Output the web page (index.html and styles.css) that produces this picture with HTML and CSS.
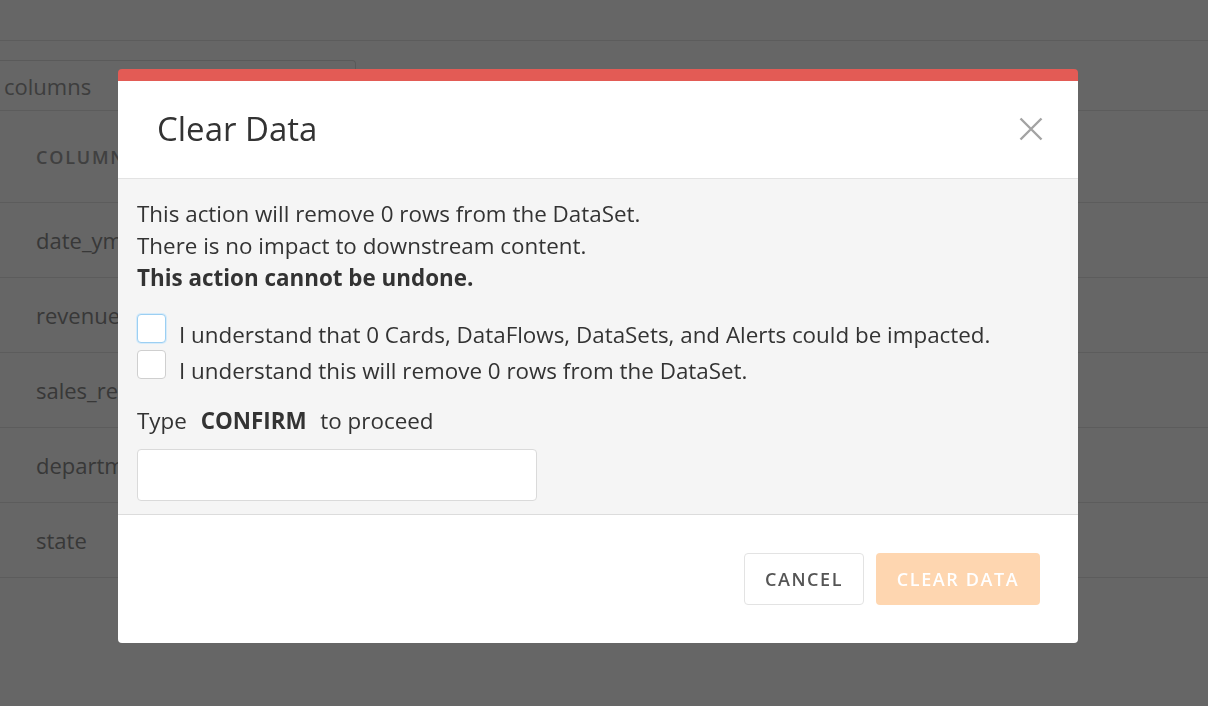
FILE: index.html
```html
<!DOCTYPE html>
<html>
<head>
<meta charset="utf-8">
<link rel="stylesheet" href="styles.css">
</head>
<body>
<div class="page">
  <div class="topbar"></div>
  <div class="searchrow">
    <div class="search">columns</div>
  </div>
  <div class="thead">COLUMNS</div>
  <div class="trow">date_ym</div>
  <div class="trow">revenue</div>
  <div class="trow">sales_rep</div>
  <div class="trow">department</div>
  <div class="trow">state</div>
</div>
<div class="overlay">
  <div class="modal">
    <div class="modal-header">
      <h2 class="title">Clear Data</h2>
      <button class="close" aria-label="Close">
        <svg width="24" height="24" viewBox="0 0 24 24"><path d="M1.5 1.5 L22.5 22.5 M22.5 1.5 L1.5 22.5" stroke="#a3a3a3" stroke-width="2.4" fill="none"/></svg>
      </button>
    </div>
    <div class="modal-body">
      <p class="line">This action will remove 0 rows from the DataSet.</p>
      <p class="line">There is no impact to downstream content.</p>
      <p class="line strong">This action cannot be undone.</p>
      <div class="checks">
        <label class="check"><span class="box focus"></span><span class="ctext">I understand that 0 Cards, DataFlows, DataSets, and Alerts could be impacted.</span></label>
        <label class="check"><span class="box"></span><span class="ctext">I understand this will remove 0 rows from the DataSet.</span></label>
      </div>
      <p class="confirm">Type <b>CONFIRM</b> to proceed</p>
      <div class="input"></div>
    </div>
    <div class="modal-footer">
      <button class="btn cancel">CANCEL</button>
      <button class="btn clear">CLEAR DATA</button>
    </div>
  </div>
</div>
</body>
</html>
```

FILE: styles.css
```css
* { box-sizing: border-box; }
html, body { margin: 0; padding: 0; }
body {
  width: 1208px;
  height: 706px;
  overflow: hidden;
  font-family: "Open Sans", "Noto Sans", sans-serif;
  background: #fff;
  color: #333;
}
.page { width: 1208px; }
.topbar { height: 41px; border-bottom: 1px solid #e6e6e6; }
.searchrow {
  height: 70px;
  padding-top: 19px;
  border-bottom: 1px solid #e6e6e6;
}
.search {
  margin-left: -10px;
  width: 366px;
  height: 51px;
  border: 1px solid #e0e0e0;
  border-bottom: none;
  border-radius: 0 4px 0 0;
  padding-left: 13px;
  font-size: 22px;
  line-height: 50px;
  color: #9a9a9a;
}
.thead {
  height: 92px;
  padding-left: 36px;
  padding-top: 34px;
  font-size: 18px;
  font-weight: 600;
  letter-spacing: 1.8px;
  color: #a0a0a0;
  border-bottom: 1px solid #e6e6e6;
}
.trow {
  height: 75px;
  padding-left: 36px;
  line-height: 74px;
  font-size: 22px;
  color: #8c8c8c;
  border-bottom: 1px solid #e6e6e6;
}
.overlay {
  position: fixed;
  inset: 0;
  background: rgba(0,0,0,0.6);
  padding: 69px 0 0 118px;
}
.modal {
  width: 960px;
  background: #fff;
  border-radius: 4px;
  border-top: 12px solid #e35b55;
  overflow: hidden;
}
.modal-header {
  height: 98px;
  display: flex;
  align-items: center;
  justify-content: space-between;
  padding: 0 35px 0 39px;
  border-bottom: 1px solid #e3e3e3;
}
.title {
  margin: 0;
  font-size: 33px;
  font-weight: 400;
  color: #333;
  padding-bottom: 2px;
}
.close {
  border: none;
  background: none;
  padding: 0;
  width: 24px;
  height: 24px;
  display: flex;
  margin-bottom: 2px;
}
.modal-body {
  background: #f5f5f5;
  padding: 19px 20px 13px 19px;
  border-bottom: 1px solid #dcdcdc;
}
.line {
  margin: 0;
  font-size: 22.4px;
  line-height: 32px;
}
.strong { font-weight: 700; }
.checks {
  margin-top: 20px;
  display: flex;
  flex-direction: column;
  gap: 7px;
}
.check {
  display: flex;
  align-items: flex-start;
  gap: 13px;
  height: 29px;
}
.box {
  width: 29px;
  height: 29px;
  flex: none;
  background: #fff;
  border: 1px solid #cfcfcf;
  border-radius: 4px;
}
.box.focus {
  border-color: #9ccff2;
  box-shadow: 0 0 0 1px #d6ebfa;
}
.ctext {
  font-size: 22.4px;
  line-height: 28px;
  margin-top: 7px;
}
.confirm {
  margin: 26px 0 0 0;
  font-size: 22.4px;
  line-height: 32px;
}
.confirm b { font-weight: 700; margin: 0 8px; }
.input {
  margin-top: 12px;
  width: 400px;
  height: 52px;
  background: #fff;
  border: 1px solid #dadada;
  border-radius: 4px;
}
.modal-footer {
  height: 128px;
  display: flex;
  justify-content: flex-end;
  align-items: center;
  gap: 12px;
  padding-right: 38px;
}
.btn {
  height: 52px;
  border-radius: 4px;
  font-family: "Open Sans", "Noto Sans", sans-serif;
  font-size: 18px;
  font-weight: 600;
  letter-spacing: 1.6px;
  padding: 0 10px;
}
.cancel {
  width: 120px;
  background: #fff;
  border: 1px solid #e3e3e3;
  color: #555;
}
.clear {
  width: 164px;
  background: #fed6b0;
  border: none;
  color: #fff;
}
```
